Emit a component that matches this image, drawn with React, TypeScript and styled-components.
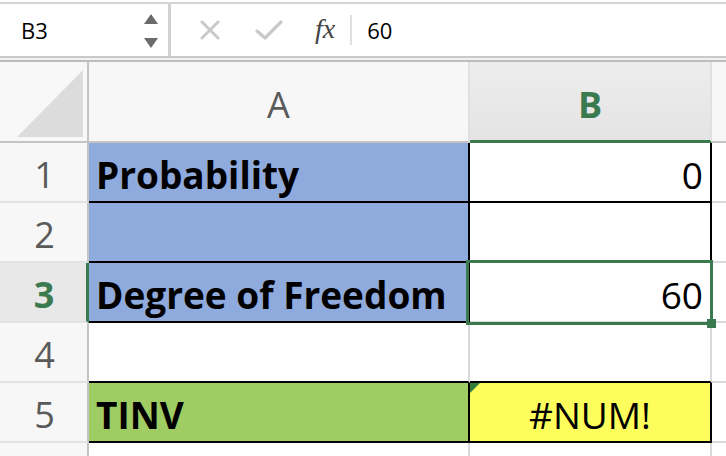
import styled, { createGlobalStyle } from "styled-components";

const GREEN = "#3b7a4e";
const GRID = "#dadada";
const BLACK = "#000";

const GlobalStyle = createGlobalStyle`
  html, body { margin: 0; padding: 0; background: #fff; }
  body { font-family: "Open Sans", "Noto Sans", sans-serif; overflow: hidden; }
`;

const Window = styled.div`
  width: 726px;
  height: 456px;
  overflow: hidden;
  display: flex;
  flex-direction: column;
  background: #fff;
`;

const FormulaBar = styled.div`
  flex: none;
  height: 54px;
  margin-top: 2px;
  box-sizing: border-box;
  border-top: 2px solid #d4d4d4;
  display: flex;
  align-items: stretch;
  color: #000;
`;

const NameBox = styled.div`
  width: 168px;
  box-sizing: border-box;
  padding: 0 10px 0 21px;
  display: flex;
  align-items: center;
  justify-content: space-between;
  font-size: 22px;
`;

const Spinner = styled.div`
  display: flex;
  flex-direction: column;
  gap: 14px;
  margin-top: 2px;
`;

const Arrow = styled.span<{ $down?: boolean }>`
  width: 0;
  height: 0;
  border-left: 7px solid transparent;
  border-right: 7px solid transparent;
  ${(p) =>
    p.$down
      ? "border-top: 10px solid #6b6b6b;"
      : "border-bottom: 10px solid #6b6b6b;"}
`;

const Divider = styled.div`
  width: 3px;
  background: #d2d2d2;
`;

const Tools = styled.div`
  display: flex;
  align-items: center;
  padding-left: 29px;
  font-size: 22px;
`;

const ToolIcon = styled.svg<{ $gap: number }>`
  margin-right: ${(p) => p.$gap}px;
  flex: none;
`;

const Fx = styled.span`
  font-family: "Liberation Serif", "DejaVu Serif", serif;
  font-style: italic;
  font-size: 28px;
  color: #444;
  margin-right: 15px;
  margin-top: -2px;
`;

const ThinRule = styled.span`
  width: 2px;
  height: 30px;
  background: #e0e0e0;
  margin-right: 15px;
`;

const Band = styled.div`
  flex: none;
  height: 6px;
  box-sizing: border-box;
  border-top: 2px solid #c9c9c9;
  border-bottom: 2px solid #bdbdbd;
  background: #f1f1f1;
`;

const Sheet = styled.div`
  flex: none;
  display: grid;
  grid-template-columns: 89px 381px 242px 1fr;
  grid-template-rows: 81px repeat(6, 60px);
`;

const Corner = styled.div`
  background: #f8f8f8;
  border-right: 2px solid #c4c4c4;
  border-bottom: 2px solid #c4c4c4;
  display: flex;
  align-items: flex-end;
  justify-content: flex-end;
  padding: 0 4px 4px 0;
`;

const Triangle = styled.div`
  width: 66px;
  height: 67px;
  background: #dcdcdc;
  clip-path: polygon(100% 0, 100% 100%, 0 100%);
`;

const ColHeader = styled.div<{ $selected?: boolean }>`
  background: ${(p) => (p.$selected ? "linear-gradient(#ededed, #e4e4e4)" : "#f7f7f7")};
  border-right: 2px solid #e0e0e0;
  border-bottom: ${(p) => (p.$selected ? `3px solid ${GREEN}` : "2px solid #c4c4c4")};
  display: flex;
  align-items: center;
  justify-content: center;
  padding-top: 6px;
  font-size: 36px;
  font-weight: ${(p) => (p.$selected ? 700 : 400)};
  color: ${(p) => (p.$selected ? GREEN : "#5a5a5a")};
`;

const RowHeader = styled.div<{ $selected?: boolean }>`
  background: ${(p) => (p.$selected ? "#e8e8e8" : "#f7f7f7")};
  border-right: ${(p) => (p.$selected ? `3px solid ${GREEN}` : "2px solid #c4c4c4")};
  border-bottom: 2px solid #e2e2e2;
  display: flex;
  align-items: center;
  justify-content: center;
  padding: 5px 0 0 2px;
  font-size: 36px;
  font-weight: ${(p) => (p.$selected ? 700 : 400)};
  color: ${(p) => (p.$selected ? GREEN : "#5a5a5a")};
`;

type Align = "left" | "right" | "center";

const Cell = styled.div<{
  $bg?: string;
  $right?: string;
  $bottom?: string;
  $align?: Align;
  $bold?: boolean;
  $raised?: boolean;
}>`
  position: relative;
  z-index: ${(p) => (p.$raised ? 2 : 0)};
  background: ${(p) => p.$bg ?? "#fff"};
  border-right: 2px solid ${(p) => p.$right ?? GRID};
  border-bottom: 2px solid ${(p) => p.$bottom ?? GRID};
  display: flex;
  align-items: center;
  justify-content: ${(p) =>
    p.$align === "right" ? "flex-end" : p.$align === "center" ? "center" : "flex-start"};
  padding: 5px 7px 0 7px;
  font-size: 37px;
  font-weight: ${(p) => (p.$bold ? 700 : 400)};
  color: #000;
  white-space: nowrap;
`;

const Selection = styled.div`
  position: absolute;
  top: -3px;
  left: -4px;
  right: -3px;
  bottom: -4px;
  border: 3px solid ${GREEN};
  pointer-events: none;
`;

const Handle = styled.div`
  position: absolute;
  right: -6px;
  bottom: -6px;
  width: 9px;
  height: 9px;
  background: ${GREEN};
`;

const ErrorFlag = styled.div`
  position: absolute;
  top: 0;
  left: 0;
  width: 0;
  height: 0;
  border-top: 10px solid #2f7d3c;
  border-right: 10px solid transparent;
`;

type CellSpec = {
  text?: string;
  bg?: string;
  right?: string;
  bottom?: string;
  align?: Align;
  bold?: boolean;
  selected?: boolean;
  error?: boolean;
};

const BLUE = "#8faadc";
const LIME = "#a0cd63";
const YELLOW = "#fdfd5c";

const rows: CellSpec[][] = [
  [
    { text: "Probability", bg: BLUE, right: BLACK, bottom: BLACK, bold: true },
    { text: "0", right: BLACK, bottom: BLACK, align: "right" },
    {},
  ],
  [
    { bg: BLUE, right: BLACK, bottom: BLACK },
    { right: BLACK, bottom: BLACK },
    {},
  ],
  [
    { text: "Degree of Freedom", bg: BLUE, right: BLACK, bottom: BLACK, bold: true },
    { text: "60", align: "right", selected: true },
    {},
  ],
  [{ bottom: BLACK }, { bottom: BLACK }, {}],
  [
    { text: "TINV", bg: LIME, right: BLACK, bottom: BLACK, bold: true },
    { text: "#NUM!", bg: YELLOW, right: BLACK, bottom: BLACK, align: "center", error: true },
    {},
  ],
  [{}, {}, {}],
];

export default function App() {
  return (
    <Window>
      <GlobalStyle />
      <FormulaBar>
        <NameBox>
          <span>B3</span>
          <Spinner>
            <Arrow />
            <Arrow $down />
          </Spinner>
        </NameBox>
        <Divider />
        <Tools>
          <ToolIcon $gap={35} width="20" height="20" viewBox="0 0 20 20">
            <path d="M2 2 L18 18 M18 2 L2 18" stroke="#c9c9c9" strokeWidth="3" strokeLinecap="round" />
          </ToolIcon>
          <ToolIcon $gap={32} width="28" height="22" viewBox="0 0 28 22">
            <path d="M2 12 L10 19 L26 3" stroke="#c9c9c9" strokeWidth="3.2" fill="none" strokeLinecap="round" strokeLinejoin="round" />
          </ToolIcon>
          <Fx>fx</Fx>
          <ThinRule />
          <span>60</span>
        </Tools>
      </FormulaBar>
      <Band />
      <Sheet>
        <Corner>
          <Triangle />
        </Corner>
        <ColHeader>A</ColHeader>
        <ColHeader $selected>B</ColHeader>
        <ColHeader />
        {rows.map((row, r) => [
          <RowHeader key={`h${r}`} $selected={r === 2}>
            {r < 5 ? r + 1 : ""}
          </RowHeader>,
          ...row.map((c, i) => (
            <Cell
              key={`${r}-${i}`}
              $bg={c.bg}
              $right={c.right}
              $bottom={c.bottom}
              $align={c.align}
              $bold={c.bold}
              $raised={c.selected}
            >
              {c.error && <ErrorFlag />}
              {c.text}
              {c.selected && (
                <Selection>
                  <Handle />
                </Selection>
              )}
            </Cell>
          )),
        ])}
      </Sheet>
    </Window>
  );
}
